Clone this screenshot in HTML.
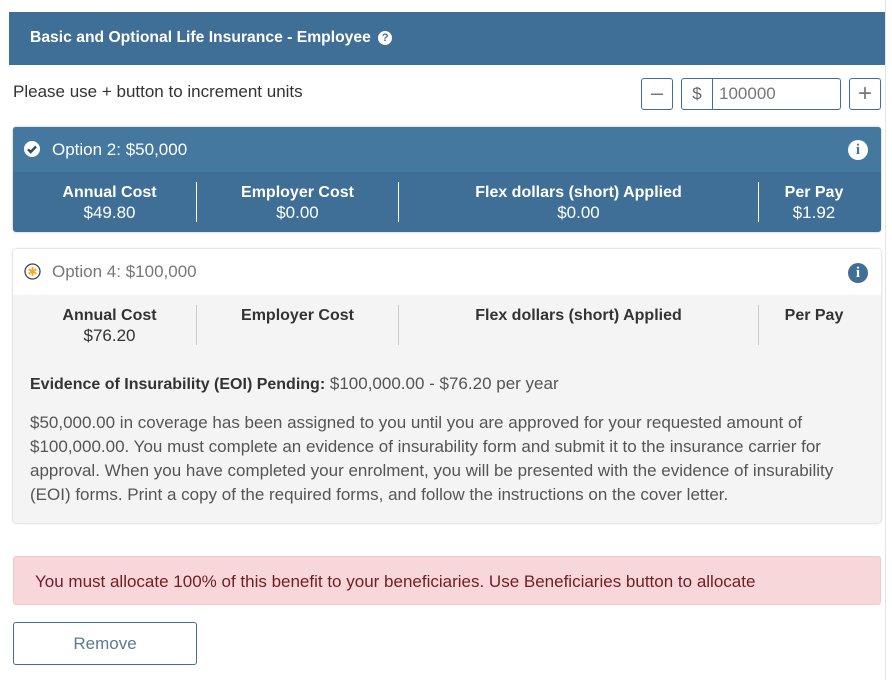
<!DOCTYPE html>
<html><head><meta charset="utf-8"><style>
*{box-sizing:border-box;margin:0;padding:0}
body{width:892px;height:680px;background:#fff;font-family:"Liberation Sans",Arial,sans-serif;position:relative;overflow:hidden;color:#333}
.abs{position:absolute}
.hdr{left:9px;top:12px;width:876px;height:53px;background:#3f6f96;color:#fff;font-weight:bold;font-size:15.7px;padding:17px 0 0 21px}
.q{display:inline-block;width:14px;height:14px;border-radius:50%;background:#fff;color:#3f6f96;font-size:11px;text-align:center;line-height:14px;vertical-align:1px;margin-left:3px}
.btn{border:1px solid #3f6f96;border-radius:3px;background:#fff;color:#777;text-align:center}
.card{left:13px;width:868px;border-radius:3px;box-shadow:0 0 2px rgba(0,0,0,.3)}
.col{position:absolute;text-align:center;font-size:17px;line-height:20px}
.col b{display:block;font-size:16px}
.div{position:absolute;width:1px;height:40px}
.info{position:absolute;width:20px;height:20px;border-radius:50%;text-align:center;font:bold 15px/20px "Liberation Serif",serif}
</style></head><body>
<div class="abs" style="left:885px;top:0;width:1px;height:680px;background:#e4e4e4"></div>
<div class="abs hdr">Basic and Optional Life Insurance - Employee <span class="q">?</span></div>
<div class="abs" style="left:13px;top:82px;font-size:17px;color:#333">Please use + button to increment units</div>
<div class="abs btn" style="left:641px;top:78px;width:32px;height:32px;font-size:22px;line-height:28px">–</div>
<div class="abs btn" style="left:681px;top:78px;width:160px;height:32px;font-size:17px;line-height:30px;text-align:left"><span style="display:inline-block;width:31px;text-align:center;border-right:1px solid #3f6f96;color:#666">$</span><span style="padding-left:6px;color:#777">100000</span></div>
<div class="abs btn" style="left:849px;top:78px;width:32px;height:32px;font-size:24px;line-height:29px">+</div>

<div class="abs card" style="top:127px;height:105px;background:#3f6f96;color:#fff">
<div style="height:45px;background:#45789f;border-radius:3px 3px 0 0;font-size:17px;padding:13px 0 0 39px">Option 2: $50,000</div>
<svg class="abs" style="left:11px;top:14px" width="16" height="16" viewBox="0 0 16 16"><circle cx="8" cy="8" r="8" fill="#fff"/><path d="M4 8.3l2.7 2.7L12 5.5" stroke="#2b4a6a" stroke-width="2.4" fill="none"/></svg>
<div class="info" style="left:835px;top:13px;background:#fff;color:#45789f">i</div>
<div class="col" style="left:0;width:193px;top:56px"><b>Annual Cost</b>$49.80</div>
<div class="div" style="left:183px;top:55px;background:#fff"></div>
<div class="col" style="left:184px;width:201px;top:56px"><b>Employer Cost</b>$0.00</div>
<div class="div" style="left:385px;top:55px;background:#fff"></div>
<div class="col" style="left:386px;width:359px;top:56px"><b>Flex dollars (short) Applied</b>$0.00</div>
<div class="div" style="left:745px;top:55px;background:#fff"></div>
<div class="col" style="left:746px;width:110px;top:56px"><b>Per Pay</b>$1.92</div>
</div>

<div class="abs card" style="top:249px;height:274px;background:#f4f4f4">
<div style="height:46px;background:#fff;border-radius:3px 3px 0 0;font-size:17px;color:#777;padding:13px 0 0 39px">Option 4: $100,000</div>
<svg class="abs" style="left:11px;top:14px" width="17" height="17" viewBox="0 0 17 17"><circle cx="8.5" cy="8.5" r="7.5" fill="#fff" stroke="#444" stroke-width="1.3"/><path d="M8.5 4v9M4.6 6.2l7.8 4.6M12.4 6.2l-7.8 4.6" stroke="#f5a623" stroke-width="1.8"/></svg>
<div class="info" style="left:835px;top:14px;background:#3f6f96;color:#fff">i</div>
<div class="col" style="left:0;width:193px;top:57px;color:#333"><b>Annual Cost</b>$76.20</div>
<div class="div" style="left:183px;top:56px;background:#ccc"></div>
<div class="col" style="left:184px;width:201px;top:57px;color:#333"><b>Employer Cost</b></div>
<div class="div" style="left:385px;top:56px;background:#ccc"></div>
<div class="col" style="left:386px;width:359px;top:57px;color:#333"><b>Flex dollars (short) Applied</b></div>
<div class="div" style="left:745px;top:56px;background:#ccc"></div>
<div class="col" style="left:746px;width:110px;top:57px;color:#333"><b>Per Pay</b></div>
<div class="abs" style="left:17px;top:125px;font-size:17px;color:#555;white-space:nowrap"><b style="color:#333;font-size:16px">Evidence of Insurability (EOI) Pending:</b> $100,000.00 - $76.20 per year</div>
<div class="abs" style="left:17px;top:162px;width:820px;font-size:17px;line-height:24px;color:#555">$50,000.00 in coverage has been assigned to you until you are approved for your requested amount of $100,000.00. You must complete an evidence of insurability form and submit it to the insurance carrier for approval. When you have completed your enrolment, you will be presented with the evidence of insurability (EOI) forms. Print a copy of the required forms, and follow the instructions on the cover letter.</div>
</div>

<div class="abs" style="left:13px;top:556px;width:868px;height:49px;background:#f8d7da;border:1px solid #f5c6cb;border-radius:3px;color:#721c24;font-size:17px;padding:15px 0 0 21px;white-space:nowrap">You must allocate 100% of this benefit to your beneficiaries. Use Beneficiaries button to allocate</div>
<div class="abs btn" style="left:13px;top:622px;width:184px;height:43px;font-size:17px;line-height:41px;color:#5a7a95">Remove</div>
</body></html>
